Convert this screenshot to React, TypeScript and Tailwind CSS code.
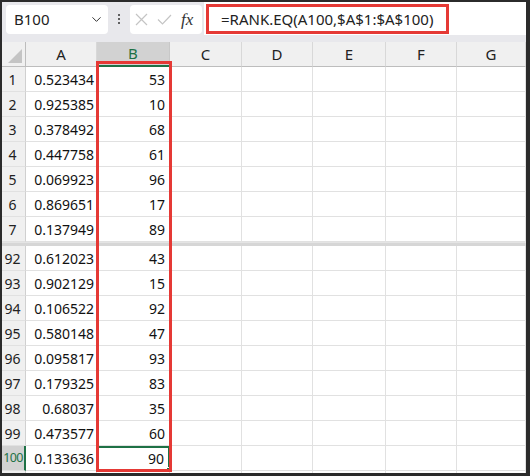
import React from 'react';
import { ChevronDown } from 'lucide-react';

const cols = ['A', 'B', 'C', 'D', 'E', 'F', 'G'];

const topRows = [
  { n: 1, a: '0.523434', b: '53' },
  { n: 2, a: '0.925385', b: '10' },
  { n: 3, a: '0.378492', b: '68' },
  { n: 4, a: '0.447758', b: '61' },
  { n: 5, a: '0.069923', b: '96' },
  { n: 6, a: '0.869651', b: '17' },
  { n: 7, a: '0.137949', b: '89' },
];

const bottomRows = [
  { n: 92, a: '0.612023', b: '43' },
  { n: 93, a: '0.902129', b: '15' },
  { n: 94, a: '0.106522', b: '92' },
  { n: 95, a: '0.580148', b: '47' },
  { n: 96, a: '0.095817', b: '93' },
  { n: 97, a: '0.179325', b: '83' },
  { n: 98, a: '0.68037', b: '35' },
  { n: 99, a: '0.473577', b: '60' },
  { n: 100, a: '0.133636', b: '90' },
];

const grid = 'grid grid-cols-[24px_71px_73px_72px_71px_73px_71px_1fr]';

function Row({ n, a, b }: { n: number; a: string; b: string }) {
  const active = n === 100;
  return (
    <div className={`${grid} h-[25px]`}>
      <div
        className={`flex items-center justify-center border-b border-[#e1e1e1] ${
          active
            ? 'bg-[#d2d2d2] text-[#1e7145] border-r-2 border-r-[#1e7145] text-[12.5px] tracking-[-0.6px] pr-0'
            : 'bg-[#f0f0f0] text-[#222] border-r border-r-[#d0d0d0] text-[14px] pr-[2px]'
        }`}
      >
        {n}
      </div>
      <div className="flex items-center justify-end pr-[2px] border-r border-b border-[#e1e1e1] text-[14px] text-[#111]">{a}</div>
      <div
        className={`relative flex items-center justify-end pr-[4px] text-[14px] text-[#111] ${
          active ? 'border-2 border-[#1e7145]' : 'border-r border-b border-[#e1e1e1]'
        }`}
      >
        {b}
        {active && <span className="absolute -right-[3px] -bottom-[3px] w-[5px] h-[5px] bg-[#1e7145] border border-white" />}
      </div>
      {[0, 1, 2, 3, 4].map((i) => (
        <div key={i} className="border-r border-b border-[#e1e1e1]" />
      ))}
    </div>
  );
}

export default function App() {
  return (
    <div
      className="w-[530px] h-[476px] bg-[#2b2b2b] pt-[2px] pl-[2px] pr-[4px] pb-[3px] overflow-hidden"
      style={{ fontFamily: '"Noto Sans", "Noto Sans CJK JP", sans-serif' }}
    >
      <div className="relative w-full h-full bg-white overflow-hidden">
        {/* Toolbar */}
        <div className="flex h-[40px] bg-[#e8e8ec]">
          <div className="mt-[3px] ml-[4px] w-[102px] h-[29px] bg-white rounded-[4px] flex items-center justify-between pl-[8px] pr-[4px] text-[15px] text-[#222]">
            <span>B100</span>
            <ChevronDown className="w-[15px] h-[15px] text-[#333]" strokeWidth={1.6} />
          </div>
          <div className="w-[22px] flex items-start justify-center pt-[12px]">
            <div className="flex flex-col gap-[2px]">
              <span className="w-[2px] h-[2px] bg-[#333] rounded-full" />
              <span className="w-[2px] h-[2px] bg-[#333] rounded-full" />
              <span className="w-[2px] h-[2px] bg-[#333] rounded-full" />
            </div>
          </div>
          <div className="mt-[3px] w-[72px] h-[29px] bg-white rounded-[4px] flex items-center pl-[5px] gap-[9px]">
            <svg width="13" height="13" viewBox="0 0 13 13" fill="none" stroke="#c4c4c4" strokeWidth="1.2">
              <path d="M1 1L12 12M12 1L1 12" />
            </svg>
            <svg width="15" height="11" viewBox="0 0 15 11" fill="none" stroke="#c4c4c4" strokeWidth="1.2">
              <path d="M1 5.5L5.5 10L14 1" />
            </svg>
            <span
              className="text-[17px] italic text-[#333] leading-none"
              style={{ fontFamily: '"Liberation Serif", serif' }}
            >
              fx
            </span>
          </div>
          <div className="ml-[2px] flex-1 h-[33px] bg-white pt-[2px] pl-[2px]">
            <div className="w-[243px] h-[30px] border-[3px] border-[#e53935] flex items-center pl-[12px] text-[15px] text-[#222]">
              =RANK.EQ(A100,$A$1:$A$100)
            </div>
          </div>
        </div>

        {/* Column headers */}
        <div className={`${grid} h-[25px]`}>
          <div className="relative bg-[#f0f0f0] border-r border-b border-[#bdbdbd]">
            <span className="absolute right-[3px] bottom-[3px] w-0 h-0 border-l-[14px] border-l-transparent border-b-[14px] border-b-[#c4c4c4]" />
          </div>
          {cols.map((c) => (
            <div
              key={c}
              className={`flex items-center justify-center text-[15px] ${
                c === 'B'
                  ? 'bg-[#d2d2d2] text-[#1e7145] border-b-2 border-b-[#1e7145] border-r border-r-[#c8c8c8]'
                  : 'bg-[#f0f0f0] text-[#222] border-b border-b-[#bdbdbd] border-r border-r-[#d8d8d8]'
              }`}
            >
              {c}
            </div>
          ))}
        </div>

        {topRows.map((r) => (
          <Row key={r.n} {...r} />
        ))}

        {/* Freeze / split bar */}
        <div className="h-[4px] bg-[#d6d6d6] border-t border-[#e4e4e4]" />

        {bottomRows.map((r) => (
          <Row key={r.n} {...r} />
        ))}

        <div className={`${grid} h-[6px]`}>
          <div className="bg-[#f0f0f0] border-r border-[#d0d0d0]" />
          {[0, 1, 2, 3, 4, 5, 6].map((i) => (
            <div key={i} className="border-r border-[#e1e1e1]" />
          ))}
        </div>

        {/* Red highlight around column B */}
        <div className="absolute left-[94px] top-[59px] w-[76px] h-[411px] border-[3px] border-[#e53935] pointer-events-none" />
      </div>
    </div>
  );
}
